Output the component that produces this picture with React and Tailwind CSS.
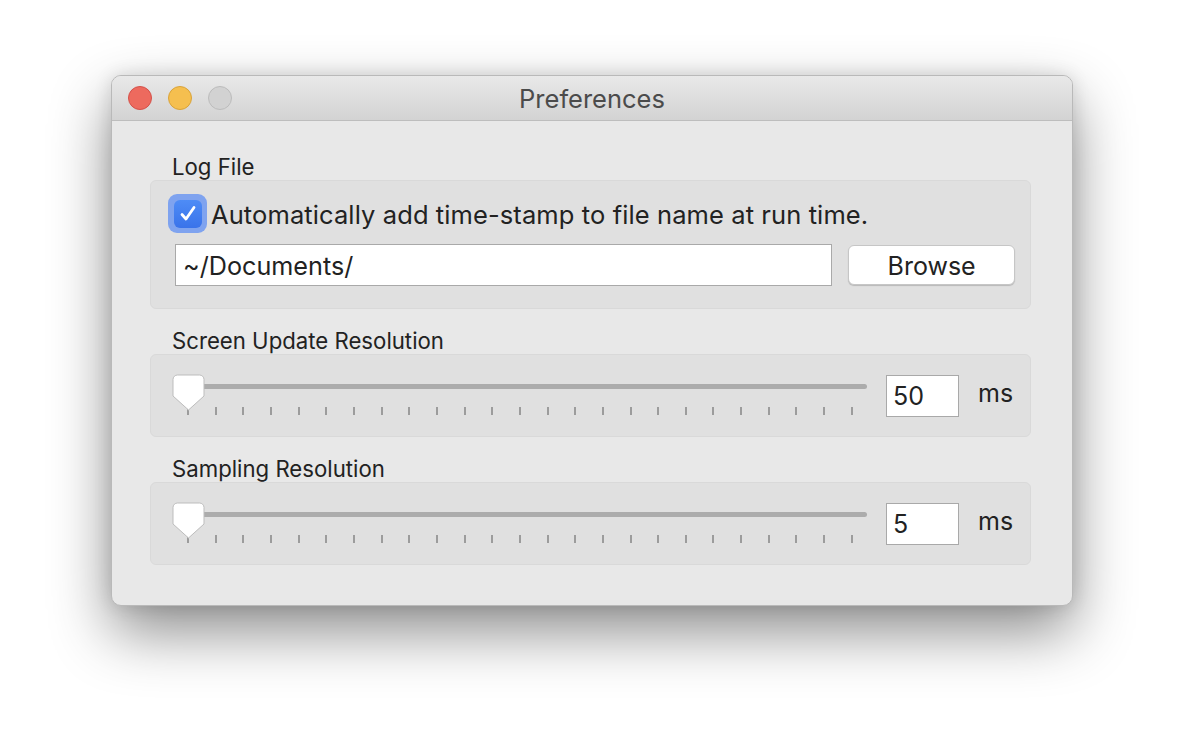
import React from 'react';

const FONT = { fontFamily: 'Inter, "Liberation Sans", sans-serif' };

function TrafficLights() {
  return (
    <div className="flex items-center gap-[16px]">
      <span className="w-[24px] h-[24px] rounded-full bg-[#ed6a5e] border border-[#d4514a]" />
      <span className="w-[24px] h-[24px] rounded-full bg-[#f5bf4f] border border-[#d9a33a]" />
      <span className="w-[24px] h-[24px] rounded-full bg-[#d2d2d2] border border-[#bcbcbc]" />
    </div>
  );
}

function Thumb() {
  return (
    <svg width="33" height="38" viewBox="0 0 33 38" className="absolute left-0 top-[19px]">
      <path
        d="M5.5 1 H27.5 A4.5 4.5 0 0 1 32 5.5 V22 L16.5 36 L1 22 V5.5 A4.5 4.5 0 0 1 5.5 1 Z"
        fill="#ffffff"
        stroke="#bdbdbd"
        strokeWidth="1"
      />
    </svg>
  );
}

function Slider() {
  const ticks = Array.from({ length: 25 });
  return (
    <div className="relative w-[695px] h-full">
      {/* track */}
      <div className="absolute left-[15px] right-0 top-[29px] h-[5px] rounded-full bg-[#acacac]" />
      {/* ticks */}
      <div className="absolute left-[15px] w-[666px] top-[52px] flex justify-between">
        {ticks.map((_, i) => (
          <span key={i} className="w-[2px] h-[8px] bg-[#9c9c9c]" />
        ))}
      </div>
      <Thumb />
    </div>
  );
}

function SliderPanel({ value }) {
  return (
    <div className="h-[83px] rounded-[6px] bg-[#e0e0e0] border border-[#d9d9d9] flex items-stretch pl-[21px]">
      <Slider />
      <div className="ml-[19px] mt-[20px] w-[73px] h-[42px] bg-white border border-[#a9a9a9] flex items-center pl-[6px] pt-[2px] text-[25px] text-[#222]">
        {value}
      </div>
      <span className="ml-[19px] mt-[21px] h-[36px] flex items-center text-[25px] text-[#222]">ms</span>
    </div>
  );
}

function Label({ children }) {
  return (
    <div className="h-[24px] mb-[2px] pl-[22px] pt-[2px] flex items-center text-[22.2px] text-[#222]">{children}</div>
  );
}

export default function App() {
  return (
    <div className="min-h-screen w-full bg-white pt-[75px]" style={FONT}>
      <div className="mx-auto w-[962px] h-[531px] rounded-[10px] bg-[#e8e8e8] border border-[#b9b9b9] shadow-[0_26px_60px_rgba(0,0,0,0.45),0_0_18px_rgba(0,0,0,0.12)] overflow-hidden flex flex-col">
        {/* title bar */}
        <div className="relative h-[45px] shrink-0 bg-gradient-to-b from-[#e9e9e9] to-[#d3d3d3] border-b border-[#bdbdbd] flex items-center pl-[16px]">
          <TrafficLights />
          <div className="absolute inset-0 flex items-center justify-center pt-[3px] text-[25.5px] text-[#4b4b4b]">
            Preferences
          </div>
        </div>

        {/* content */}
        <div className="pt-[33px] pl-[38px] pr-[41px]">
          <Label>Log File</Label>
          <div className="h-[129px] rounded-[6px] bg-[#e0e0e0] border border-[#d9d9d9] pt-[13px] pl-[17px] pr-[15px]">
            <div className="flex items-center h-[39px]">
              <div className="w-[39px] h-[39px] rounded-[9px] bg-[#7fa3ef] flex items-center justify-center">
                <div className="w-[28px] h-[28px] rounded-[6px] bg-gradient-to-b from-[#4e8cf6] to-[#3a73ea] flex items-center justify-center">
                  <svg width="20" height="20" viewBox="0 0 20 20">
                    <path d="M4 10.5 L8 15 L16 3.5" fill="none" stroke="#fff" strokeWidth="2.8" strokeLinecap="round" strokeLinejoin="round" />
                  </svg>
                </div>
              </div>
              <span className="ml-[4px] pt-[4px] text-[25.5px] text-[#222] tracking-[0.1px]">
                Automatically add time-stamp to file name at run time.
              </span>
            </div>
            <div className="flex items-center mt-[11px] pl-[7px]">
              <div className="w-[658px] h-[42px] bg-white border border-[#a9a9a9] flex items-center pl-[7px] pt-[3px] text-[25.2px] text-[#222]">
                ~/Documents/
              </div>
              <button className="ml-[16px] w-[167px] h-[40px] rounded-[6px] bg-white border border-[#c6c6c6] shadow-[0_1px_1px_rgba(0,0,0,0.18)] pt-[2px] text-[25px] text-[#222]">
                Browse
              </button>
            </div>
          </div>

          <div className="mt-[19px]">
            <Label>Screen Update Resolution</Label>
            <SliderPanel value="50" />
          </div>

          <div className="mt-[19px]">
            <Label>Sampling Resolution</Label>
            <SliderPanel value="5" />
          </div>
        </div>
      </div>
    </div>
  );
}
